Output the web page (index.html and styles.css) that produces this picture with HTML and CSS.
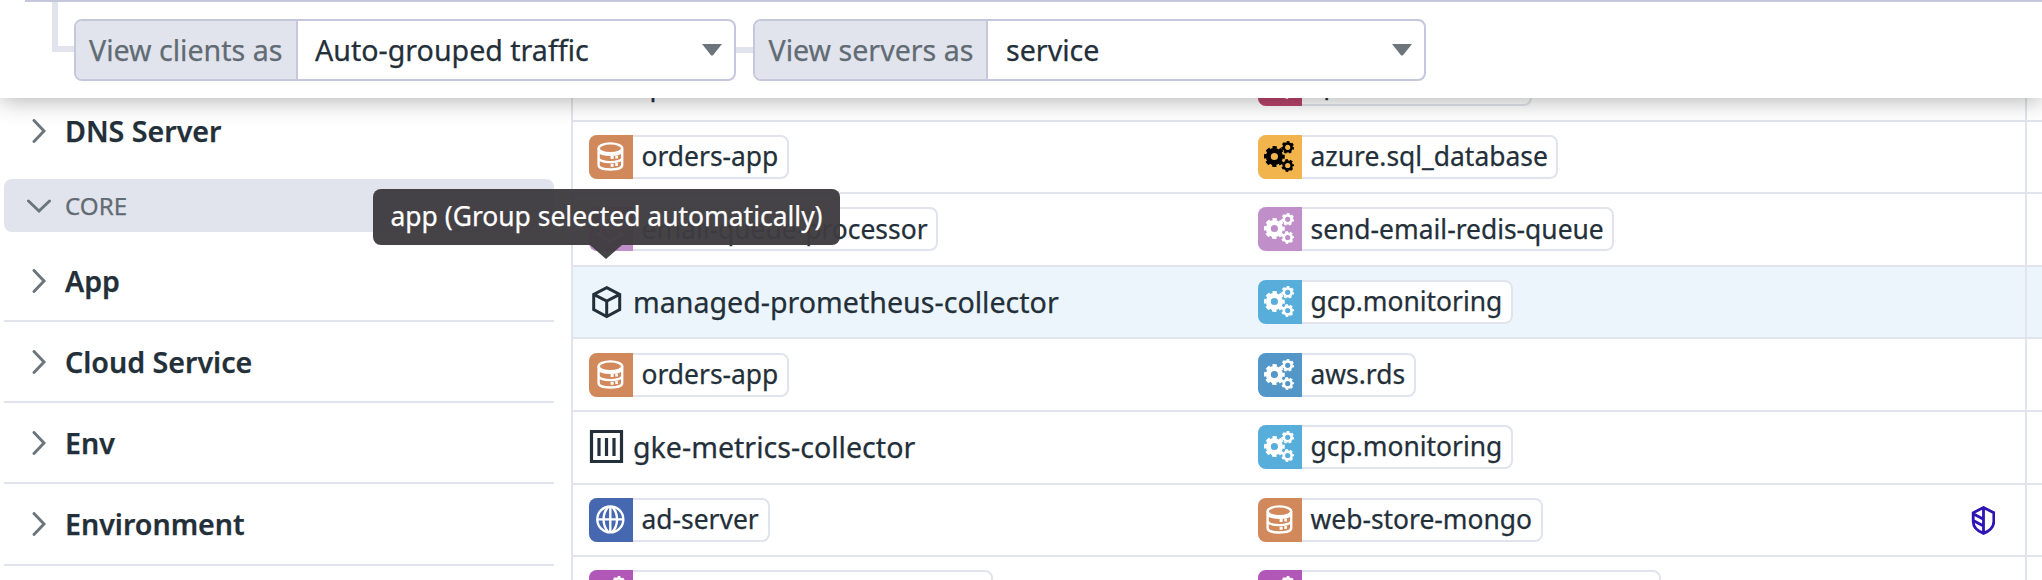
FILE: index.html
```html
<!DOCTYPE html>
<html lang="en">
<head>
<meta charset="utf-8">
<title>Network traffic</title>
<link rel="stylesheet" href="styles.css">
</head>
<body>
<svg class="defs" aria-hidden="true">
  <symbol id="gears" viewBox="0 0 44 44">
    <g fill="none" stroke="currentColor">
      <circle cx="16.4" cy="21.500" r="6.100" stroke-width="5"/>
      <circle cx="16.400" cy="21.500" r="9" stroke-width="2.800" stroke-dasharray="4.300 2.769" stroke-dashoffset="2.150"/>
      <circle cx="29.700" cy="12.300" r="3.900" stroke-width="2.600"/>
      <circle cx="29.700" cy="12.300" r="5.500" stroke-width="1.800" stroke-dasharray="2.700 2.237" stroke-dashoffset="0.400"/>
      <circle cx="29.700" cy="30.500" r="3.900" stroke-width="2.600"/>
      <circle cx="29.700" cy="30.500" r="5.500" stroke-width="1.800" stroke-dasharray="2.700 2.237" stroke-dashoffset="2"/>
    </g>
  </symbol>
  <symbol id="database" viewBox="0 0 44 44">
    <g fill="none" stroke="currentColor" stroke-width="2.400">
      <ellipse cx="21.400" cy="13.300" rx="11.800" ry="4.900"/>
      <path d="M9.600 13.300v16.700c0 2.800 5 4.500 11.800 4.500s11.800-1.700 11.800-4.500V13.300"/>
      <path d="M9.600 16.300c1.500 2.500 6 3.400 11.800 3.400s10.300-.9 11.800-3.400M9.600 23.700c1.500 2.500 6 3.400 11.800 3.400s10.300-.9 11.800-3.400"/>
    </g>
    <path fill="currentColor" d="M21.600 21h3v3h-3zM26.300 20.400h2.600v3h-2.600zM21.600 28.700h3v3h-3zM26.300 28h2.600v3h-2.600z"/>
  </symbol>
  <symbol id="globe" viewBox="0 0 44 44">
    <g fill="none" stroke="currentColor" stroke-width="2.400">
      <circle cx="21.300" cy="21.400" r="13"/>
      <path d="M8.300 21.400h26M21.300 8.400v26M19.500 8.600c-6.600 7-6.600 18.600 0 25.600M23.100 8.600c6.600 7 6.600 18.600 0 25.600"/>
    </g>
  </symbol>
  <symbol id="layers" viewBox="0 0 44 44">
    <path d="M21.500 9l12 6.500-12 6.500-12-6.500zM13 25l-4 2.500 12.500 7 12.500-7-4-2.500" fill="none" stroke="currentColor" stroke-width="2.200"/>
  </symbol>
  <symbol id="chevron" viewBox="0 0 24 24">
    <path d="M7 1.500L17 12 7 22.500" fill="none" stroke="currentColor" stroke-width="2.900" stroke-linecap="round"/>
  </symbol>
</svg>

<header class="toolbar">
  <div class="search-edge"></div>
  <div class="elbow"></div>
  <div class="selectors">
    <div class="select select-clients">
      <span class="select-label">View clients as</span>
      <span class="select-value">Auto-grouped traffic</span>
      <svg class="caret" viewBox="0 0 20 12"><path d="M0 0h20L11.200 11q-1.200 1.200-2.400 0z" fill="#6c757c"/></svg>
    </div>
    <div class="link"></div>
    <div class="select select-servers">
      <span class="select-label">View servers as</span>
      <span class="select-value">service</span>
      <svg class="caret" viewBox="0 0 20 12"><path d="M0 0h20L11.200 11q-1.200 1.200-2.400 0z" fill="#6c757c"/></svg>
    </div>
  </div>
</header>

<main class="content">
  <aside class="facets">
    <div class="facet facet-last"><svg class="chev"><use href="#chevron"/></svg>DNS Server</div>
    <div class="facet-group"><svg class="chev chev-open"><use href="#chevron"/></svg>CORE</div>
    <div class="facet"><svg class="chev"><use href="#chevron"/></svg>App</div>
    <div class="facet"><svg class="chev"><use href="#chevron"/></svg>Cloud Service</div>
    <div class="facet"><svg class="chev"><use href="#chevron"/></svg>Env</div>
    <div class="facet facet-tall"><svg class="chev"><use href="#chevron"/></svg>Environment</div>
  </aside>

  <section class="flows">
    <div class="row tall">
      <div class="client"><span class="plain plain-bare">op</span></div>
      <div class="server"><span class="chip chip-w274"><svg class="tile crimson"><use href="#gears"/></svg><span class="name">sp</span></span></div>
      <div class="end"></div>
    </div>
    <div class="row">
      <div class="client"><span class="chip"><svg class="tile orange"><use href="#database"/></svg><span class="name">orders-app</span></span></div>
      <div class="server"><span class="chip"><svg class="tile amber"><use href="#gears"/></svg><span class="name">azure.sql_database</span></span></div>
      <div class="end"></div>
    </div>
    <div class="row tall low-text">
      <div class="client"><span class="chip"><svg class="tile lilac"><use href="#layers"/></svg><span class="name">email-queue-processor</span></span></div>
      <div class="server"><span class="chip"><svg class="tile lilac"><use href="#gears"/></svg><span class="name">send-email-redis-queue</span></span></div>
      <div class="end"></div>
    </div>
    <div class="row active">
      <div class="client">
        <span class="plain">
          <svg class="kind" viewBox="0 0 36 36"><path d="M17.700 3.700l13 6.600v15.400l-13 6.800-13-6.800V10.300zM4.700 10.300l13 6.700 13-6.700M17.700 17v15.500" fill="none" stroke="currentColor" stroke-width="3"/></svg>managed-prometheus-collector
        </span>
        <div class="tooltip">app (Group selected automatically)</div>
      </div>
      <div class="server"><span class="chip"><svg class="tile sky"><use href="#gears"/></svg><span class="name">gcp.monitoring</span></span></div>
      <div class="end"></div>
    </div>
    <div class="row tall low">
      <div class="client"><span class="chip"><svg class="tile orange"><use href="#database"/></svg><span class="name">orders-app</span></span></div>
      <div class="server"><span class="chip"><svg class="tile steel"><use href="#gears"/></svg><span class="name">aws.rds</span></span></div>
      <div class="end"></div>
    </div>
    <div class="row tall">
      <div class="client">
        <span class="plain">
          <svg class="kind" viewBox="0 0 36 36"><path d="M2.500 2.500h30v30h-30zM10 9v18M17.500 9v18M25 9v18" fill="none" stroke="currentColor" stroke-width="3.200"/></svg>gke-metrics-collector
        </span>
      </div>
      <div class="server"><span class="chip"><svg class="tile sky"><use href="#gears"/></svg><span class="name">gcp.monitoring</span></span></div>
      <div class="end"></div>
    </div>
    <div class="row">
      <div class="client"><span class="chip chip-ad"><svg class="tile blue"><use href="#globe"/></svg><span class="name">ad-server</span></span></div>
      <div class="server">
        <span class="chip"><svg class="tile orange"><use href="#database"/></svg><span class="name">web-store-mongo</span></span>
        <svg class="shield" viewBox="0 0 24 29"><path d="M12.500 1.500l10.300 5.300v8.700c0 5-4.300 9.500-10.300 11.900C6.500 25 2.200 20.500 2.200 15.500V6.800zM12.500 1.500v26M2.700 8l9.800 5.200M2.700 14.800l9.800 5.200" fill="none" stroke="#2f14b5" stroke-width="2.800"/></svg>
      </div>
      <div class="end"></div>
    </div>
    <div class="row tall">
      <div class="client"><span class="chip chip-w404"><svg class="tile violet"><use href="#gears"/></svg></span></div>
      <div class="server"><span class="chip chip-w403"><svg class="tile violet"><use href="#gears"/></svg></span></div>
      <div class="end"></div>
    </div>
  </section>
</main>
</body>
</html>
```
FILE: styles.css
```css
* { box-sizing: border-box; }

body {
  margin: 0;
  width: 2042px;
  height: 580px;
  overflow: hidden;
  background: #fff;
  color: #232f39;
  font-family: "Noto Sans", sans-serif;
  font-size: 28.6px;
  -webkit-text-stroke: 0.25px currentColor;
}

.defs { display: none; }

/* Toolbar */
.toolbar {
  position: relative;
  z-index: 2;
  height: 98px;
  background: #fff;
  box-shadow: 0 3px 22px rgba(0, 0, 0, 0.29);
}
.search-edge {
  height: 2px;
  margin-left: 25px;
  background: #c5c7dd;
}
.elbow {
  position: absolute;
  left: 52px;
  top: 2px;
  width: 24px;
  height: 50px;
  border: solid #e1e4ec;
  border-width: 0 0 6px 6px;
}
.selectors {
  position: relative;
  display: flex;
  align-items: center;
  padding: 17px 0 0 74px;
}
.select {
  display: flex;
  align-items: center;
  height: 62px;
  border: 2px solid #c5c7dd;
  border-radius: 8px;
  background: #fff;
  overflow: hidden;
  white-space: nowrap;
}
.select-clients { width: 662px; }
.select-servers { width: 673px; }
.select-label {
  display: flex;
  align-items: center;
  align-self: stretch;
  padding: 0 0 2px 13px;
  border-right: 2px solid #c5c7dd;
  background: #e1e4ec;
  color: #616b74;
}
.select-clients .select-label { width: 222px; }
.select-servers .select-label { width: 233px; padding-left: 13.500px; }
.select-value { flex: 1; padding: 0 0 2px 17px; }
.select-servers .select-value { padding-left: 18px; }
.caret { width: 20px; height: 12px; margin-right: 12px; }
.link { width: 17px; height: 6px; background: #e1e4ec; }

/* Facet sidebar */
.content {
  display: flex;
  height: 533px;
  margin-top: -51px;
  overflow: hidden;
}
.facets {
  width: 571px;
  padding: 44px 17px 0 4px;
}
.facet, .facet-group {
  display: flex;
  align-items: center;
  gap: 14px;
  padding-left: 23px;
}
.facet {
  height: 81px;
  border-bottom: 2px solid #e1e4ec;
  font-size: 28.600px;
  font-weight: 600;
}
.facet-tall { height: 82px; padding-bottom: 1px; }
.facet-last { border-bottom-color: transparent; }
.facet-group {
  height: 53px;
  margin: 7px 0 9px;
  border-radius: 8px;
  background: #e1e4ec;
  color: #616b74;
  font-size: 24.200px;
}
.chev { width: 24px; height: 24px; color: #6c757c; }
.chev-open { transform: rotate(90deg); }

/* Flow table */
.flows {
  flex: 1;
  border-left: 2px solid #e1e4ec;
}
.row {
  display: flex;
  height: 72px;
  border-top: 2px solid #e1e4ec;
}
.row.tall { height: 73px; }
.row.active { background: #ecf5fc; }
.client {
  position: relative;
  width: 669px;
  padding: 13px 0 0 16px;
}
.server {
  position: relative;
  display: flex;
  align-items: flex-start;
  justify-content: space-between;
  width: 785px;
  padding: 13px 30px 0 16px;
  border-right: 2px solid #e1e4ec;
}
.low .client, .low .server { padding-top: 14px; }
.end { flex: 1; }

.chip {
  display: inline-flex;
  height: 44px;
  border-radius: 8px;
  background: #fff;
  box-shadow: inset 0 0 0 2px #e1e4ec;
  overflow: hidden;
  font-size: 26.420px;
  line-height: 42px;
  white-space: nowrap;
}
.low-text .chip { line-height: 44px; }
.name { padding: 0 10.500px 0 8.500px; }
.chip-ad { width: 181px; }
.chip-w274 { width: 274px; }
.chip-w404 { width: 404px; }
.chip-w403 { width: 403px; }
.tile { flex: none; width: 44px; height: 44px; color: #fff; }
.crimson { background: #b9446c; }
.orange { background: #d1885a; }
.amber { background: #f2b44d; color: #000; }
.lilac { background: #c08fca; }
.sky { background: #58aeda; }
.steel { background: #5396c8; }
.blue { background: #4668b0; }
.violet { background: #b157b8; }

.plain {
  display: flex;
  align-items: center;
  gap: 8px;
  height: 44px;
  line-height: 44px;
  white-space: nowrap;
}
.plain-bare { padding-left: 43px; }
.kind { width: 36px; height: 36px; }
.shield { width: 24px; height: 29px; margin-top: 8px; }

.tooltip {
  position: absolute;
  z-index: 1;
  left: -200px;
  top: -78px;
  width: 467px;
  height: 56px;
  padding-left: 17.500px;
  border-radius: 8px;
  background: rgba(62, 59, 64, 0.96);
  color: #fff;
  font-size: 26.450px;
  line-height: 54px;
  white-space: nowrap;
}
.tooltip::after {
  content: "";
  position: absolute;
  left: 217px;
  top: 56px;
  border: solid transparent;
  border-width: 14px 16px 0;
  border-top-color: rgba(62, 59, 64, 0.96);
}
```
